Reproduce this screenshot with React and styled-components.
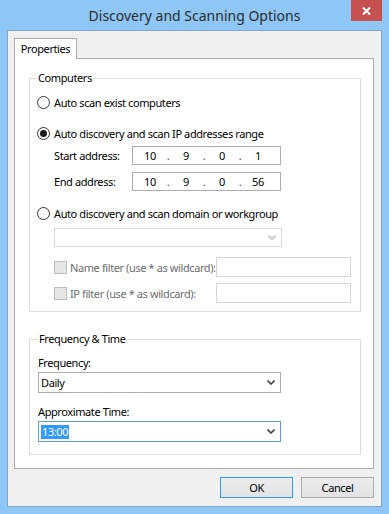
import React from "react";
import styled, { createGlobalStyle } from "styled-components";

const uiFont = `"Noto Sans", "Open Sans", "DejaVu Sans", sans-serif`;

const GlobalStyle = createGlobalStyle`
  html, body {
    margin: 0;
    padding: 0;
    background: #8ec6f6;
  }
  * {
    box-sizing: border-box;
  }
`;

const Window = styled.div`
  width: 389px;
  height: 514px;
  display: flex;
  flex-direction: column;
  background: #8ec6f6;
  font-family: ${uiFont};
  font-size: 11px;
  letter-spacing: -0.4px;
  color: #000;
`;

const TitleBar = styled.div`
  height: 30px;
  display: grid;
  grid-template-columns: 38px 1fr 38px;
  align-items: start;
`;

const Title = styled.div`
  grid-column: 2;
  text-align: center;
  font-size: 14px;
  letter-spacing: 0;
  line-height: 31px;
  color: #2b2b2b;
  white-space: nowrap;
`;

const CloseButton = styled.div`
  width: 31px;
  height: 21px;
  display: flex;
  align-items: center;
  justify-content: center;
  background: #c75050;
`;

const Client = styled.div`
  flex: 1;
  margin: 0 7px 7px 7px;
  display: flex;
  flex-direction: column;
  padding: 7px 7px 0 6px;
  background: #f0f0f0;
  border: 1px solid #7fa6cc;
`;

const TabStrip = styled.div`
  display: flex;
  position: relative;
  z-index: 1;
  margin-bottom: -1px;
`;

const Tab = styled.div`
  width: 63px;
  height: 21px;
  padding-top: 1px;
  text-align: center;
  line-height: 18px;
  background: #fff;
  border: 1px solid #acacac;
  border-bottom: none;
`;

const Panel = styled.div`
  height: 411px;
  display: flex;
  flex-direction: column;
  gap: 19px;
  padding: 11px 12px 0 14px;
  background: #fff;
  border: 1px solid #acacac;
`;

const Group = styled.fieldset`
  margin: 0;
  min-width: 0;
  padding: 0 7px ${(p) => p.$pb}px ${(p) => p.$pl}px;
  border: 1px solid #dcdcdc;
`;

const Legend = styled.legend`
  padding: 0 1px;
  line-height: 16px;
`;

const Stack = styled.div`
  display: flex;
  flex-direction: column;
`;

const RadioRow = styled.label`
  height: 16px;
  display: flex;
  align-items: center;
  gap: 4px;
  margin-top: ${(p) => p.$mt}px;
  white-space: nowrap;
`;

const Radio = styled.span`
  width: 13px;
  height: 13px;
  flex: none;
  display: flex;
  align-items: center;
  justify-content: center;
  border-radius: 50%;
  border: 1px solid #333;
  background: #fff;
  &::after {
    content: "";
    width: 7px;
    height: 7px;
    border-radius: 50%;
    background: ${(p) => (p.$checked ? "#1a1a1a" : "transparent")};
  }
`;

const IndentRow = styled.div`
  height: ${(p) => p.$h}px;
  display: flex;
  align-items: center;
  margin: ${(p) => p.$mt}px 0 0 17px;
  white-space: nowrap;
`;

const AddressLabel = styled.span`
  width: 78px;
  flex: none;
`;

const IpBox = styled.div`
  width: 149px;
  height: 19px;
  display: grid;
  grid-template-columns: 30px 6px 30px 6px 30px 6px 30px;
  align-items: center;
  justify-items: center;
  padding-left: 2px;
  border: 1px solid #acacac;
  background: #fff;
`;

const IpDot = styled.span`
  color: #5a2a6a;
`;

const ComboBox = styled.div`
  width: ${(p) => p.$w}px;
  height: ${(p) => p.$h}px;
  margin-top: ${(p) => p.$mt || 0}px;
  display: flex;
  align-items: center;
  justify-content: space-between;
  padding: 0 5px 0 2px;
  background: #fff;
  border: 1px solid
    ${(p) => (p.$focus ? "#569de5" : p.$disabled ? "#d9d9d9" : "#acacac")};
`;

const Selected = styled.span`
  padding: 0 1px;
  line-height: 14px;
  color: #fff;
  background: #3399ff;
`;

const CheckLabel = styled.span`
  width: 162px;
  flex: none;
  display: flex;
  align-items: center;
  gap: 3px;
  color: #6d6d6d;
`;

const CheckBox = styled.span`
  width: 13px;
  height: 13px;
  flex: none;
  background: #e6e6e6;
  border: 1px solid #bcbcbc;
`;

const FilterInput = styled.div`
  width: 135px;
  height: 20px;
  background: #fff;
  border: 1px solid #d5d5d5;
`;

const FieldLabel = styled.div`
  line-height: 16px;
  margin-top: ${(p) => p.$mt}px;
`;

const ButtonRow = styled.div`
  display: flex;
  justify-content: flex-end;
  gap: 8px;
  padding-top: 8px;
`;

const Button = styled.div`
  width: 73px;
  height: 21px;
  display: flex;
  align-items: center;
  justify-content: center;
  background: linear-gradient(180deg, #ececec 0%, #e2e2e2 100%);
  border: 1px solid ${(p) => (p.$default ? "#3399ff" : "#acacac")};
`;

const Chevron = ({ disabled }) => (
  <svg width="8" height="5" viewBox="0 0 8 5">
    <path
      d="M0.5 0.5 L4 4 L7.5 0.5"
      fill="none"
      stroke={disabled ? "#c4c4c4" : "#404040"}
      strokeWidth="1.6"
    />
  </svg>
);

const CloseIcon = () => (
  <svg width="9" height="8" viewBox="0 0 9 8">
    <path d="M1 0.5 L8 7.5 M8 0.5 L1 7.5" stroke="#fff" strokeWidth="2" />
  </svg>
);

const IpAddress = ({ parts }) => (
  <IpBox>
    <span>{parts[0]}</span>
    <IpDot>.</IpDot>
    <span>{parts[1]}</span>
    <IpDot>.</IpDot>
    <span>{parts[2]}</span>
    <IpDot>.</IpDot>
    <span>{parts[3]}</span>
  </IpBox>
);

export default function App() {
  return (
    <>
      <GlobalStyle />
      <Window>
        <TitleBar>
          <Title>Discovery and Scanning Options</Title>
          <CloseButton>
            <CloseIcon />
          </CloseButton>
        </TitleBar>
        <Client>
          <TabStrip>
            <Tab>Properties</Tab>
          </TabStrip>
          <Panel>
            <Group $pl={7} $pb={8}>
              <Legend>Computers</Legend>
              <Stack>
                <RadioRow $mt={8}>
                  <Radio />
                  Auto scan exist computers
                </RadioRow>
                <RadioRow $mt={15}>
                  <Radio $checked />
                  Auto discovery and scan IP addresses range
                </RadioRow>
                <IndentRow $h={19} $mt={5}>
                  <AddressLabel>Start address:</AddressLabel>
                  <IpAddress parts={["10", "9", "0", "1"]} />
                </IndentRow>
                <IndentRow $h={19} $mt={7}>
                  <AddressLabel>End address:</AddressLabel>
                  <IpAddress parts={["10", "9", "0", "56"]} />
                </IndentRow>
                <RadioRow $mt={14}>
                  <Radio />
                  Auto discovery and scan domain or workgroup
                </RadioRow>
                <IndentRow $h={19} $mt={7}>
                  <ComboBox $w={228} $h={19} $disabled>
                    <span />
                    <Chevron disabled />
                  </ComboBox>
                </IndentRow>
                <IndentRow $h={20} $mt={10}>
                  <CheckLabel>
                    <CheckBox />
                    Name filter (use * as wildcard):
                  </CheckLabel>
                  <FilterInput />
                </IndentRow>
                <IndentRow $h={20} $mt={6}>
                  <CheckLabel>
                    <CheckBox />
                    IP filter (use * as wildcard):
                  </CheckLabel>
                  <FilterInput />
                </IndentRow>
              </Stack>
            </Group>
            <Group $pl={8} $pb={12}>
              <Legend>Frequency &amp; Time</Legend>
              <Stack>
                <FieldLabel $mt={8}>Frequency:</FieldLabel>
                <ComboBox $w={243} $h={21} $mt={1}>
                  <span>Daily</span>
                  <Chevron />
                </ComboBox>
                <FieldLabel $mt={11}>Approximate Time:</FieldLabel>
                <ComboBox $w={243} $h={21} $mt={1} $focus>
                  <Selected>13:00</Selected>
                  <Chevron />
                </ComboBox>
              </Stack>
            </Group>
          </Panel>
          <ButtonRow>
            <Button $default>OK</Button>
            <Button>Cancel</Button>
          </ButtonRow>
        </Client>
      </Window>
    </>
  );
}
